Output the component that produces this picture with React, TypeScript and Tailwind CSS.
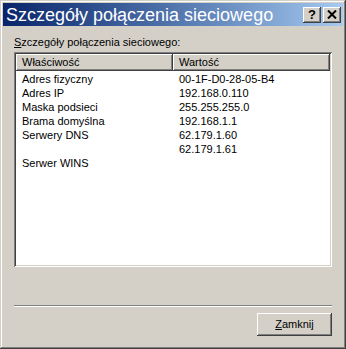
const rows: [string, string][] = [
  ["Adres fizyczny", "00-1F-D0-28-05-B4"],
  ["Adres IP", "192.168.0.110"],
  ["Maska podsieci", "255.255.255.0"],
  ["Brama domyślna", "192.168.1.1"],
  ["Serwery DNS", "62.179.1.60"],
  ["", "62.179.1.61"],
  ["Serwer WINS", ""],
];

const raised =
  "shadow-[inset_-1px_-1px_#404040,inset_1px_1px_#ffffff,inset_-2px_-2px_#808080,inset_2px_2px_#d4d0c8]";

const TitleButton = ({ children }: { children: React.ReactNode }) => (
  <div
    className={`w-[18px] h-[16px] bg-[#d4d0c8] ${raised} flex items-center justify-center text-black`}
  >
    {children}
  </div>
);

const App = () => {
  return (
    <div
      className="w-[346px] h-[349px] bg-[#d4d0c8] p-[3px] flex flex-col shadow-[inset_-1px_-1px_#404040,inset_1px_1px_#d4d0c8,inset_-2px_-2px_#808080,inset_2px_2px_#ffffff]"
      style={{ fontFamily: '"Liberation Sans", Arial, sans-serif' }}
    >
      <div className="h-[23px] flex items-center justify-between pl-[3px] pr-[2px] bg-gradient-to-r from-[#0a246a] to-[#a6caf0]">
        <span className="text-white text-[18px] leading-none whitespace-nowrap">
          Szczegóły połączenia sieciowego
        </span>
        <div className="flex gap-[2px]">
          <TitleButton>
            <span className="text-[13px] font-bold leading-none">?</span>
          </TitleButton>
          <TitleButton>
            <svg width="10" height="9" viewBox="0 0 10 9">
              <path d="M1 0.5 L9 8.5 M9 0.5 L1 8.5" stroke="#000" strokeWidth="2" />
            </svg>
          </TitleButton>
        </div>
      </div>

      <div className="flex flex-col px-[11px] pt-[10px] text-[11px] text-black">
        <div className="leading-[13px] mb-[3px]">
          <span className="underline">S</span>zczegóły połączenia sieciowego:
        </div>
        <div className="h-[215px] bg-white p-[2px] shadow-[inset_1px_1px_#808080,inset_-1px_-1px_#ffffff,inset_2px_2px_#404040,inset_-2px_-2px_#d4d0c8]">
          <div className="flex h-[17px]">
            <div className={`w-[157px] bg-[#d4d0c8] ${raised} pl-[6px] leading-[17px]`}>
              Właściwość
            </div>
            <div className={`flex-1 bg-[#d4d0c8] ${raised} pl-[6px] leading-[17px]`}>
              Wartość
            </div>
          </div>
          <div className="pt-[1px]">
            {rows.map(([k, v], i) => (
              <div key={i} className="flex h-[14px] leading-[14px]">
                <div className="w-[157px] pl-[6px]">{k}</div>
                <div className="pl-[6px]">{v}</div>
              </div>
            ))}
          </div>
        </div>
        <div className="mt-[38px] h-[2px] border-t border-t-[#808080] border-b border-b-white" />
        <div className="flex justify-end mt-[6px]">
          <div
            className={`w-[75px] h-[23px] bg-[#d4d0c8] ${raised} flex items-center justify-center`}
          >
            <span>
              <span className="underline">Z</span>amknij
            </span>
          </div>
        </div>
      </div>
    </div>
  );
};

export default App;
